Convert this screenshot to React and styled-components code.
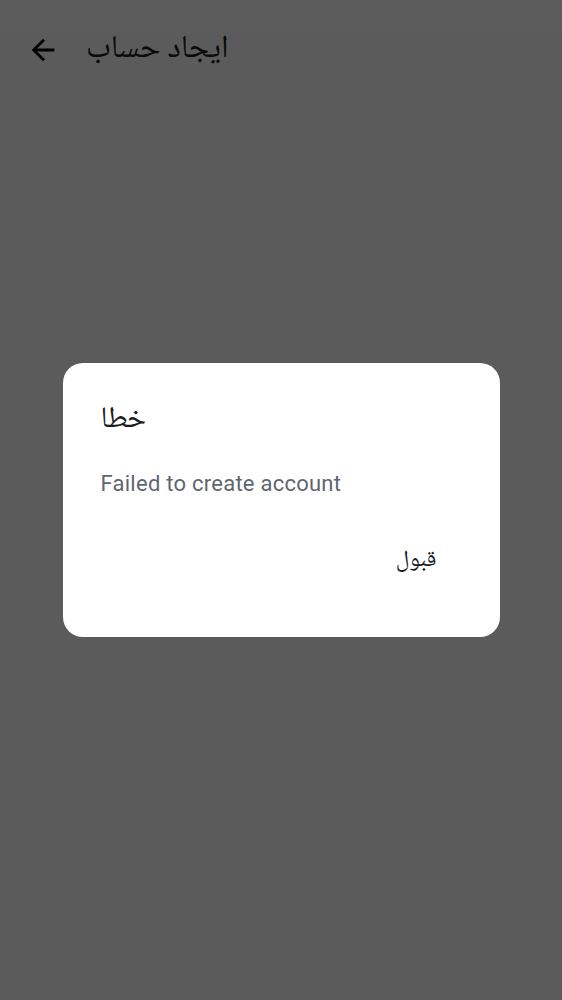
import React from 'react';
import styled, { createGlobalStyle } from 'styled-components';

const GlobalStyle = createGlobalStyle`
  html, body {
    margin: 0;
    padding: 0;
    height: 100%;
    background: #ffffff;
    font-family: Roboto, "Noto Naskh Arabic", sans-serif;
  }
  #root {
    min-height: 100%;
  }
`;

const Screen = styled.div`
  width: 562px;
  height: 1000px;
  background: #fbfbfb;
  display: flex;
  flex-direction: column;
`;

const StatusBar = styled.div`
  height: 34px;
  background: #ffffff;
`;

const AppBar = styled.div`
  height: 32px;
  display: flex;
  align-items: center;
  gap: 26px;
  padding: 0 26px;
`;

const BackButton = styled.button`
  border: 0;
  background: none;
  padding: 0;
  width: 34px;
  height: 34px;
  display: flex;
  align-items: center;
  justify-content: center;
  color: #000;
  cursor: pointer;
`;

const Title = styled.h1`
  margin: 0;
  font-family: "Noto Naskh Arabic", serif;
  font-size: 32px;
  line-height: 32px;
  font-weight: 400;
  color: #1c1c1c;
`;

const Scrim = styled.div`
  position: fixed;
  inset: 0;
  background: rgba(0, 0, 0, 0.64);
  display: flex;
  align-items: center;
  justify-content: center;
`;

const Dialog = styled.div`
  width: 437px;
  height: 274px;
  box-sizing: border-box;
  background: #ffffff;
  border-radius: 20px;
  padding: 38px 38px 0 38px;
  display: flex;
  flex-direction: column;
`;

const DialogTitle = styled.div`
  font-family: "Noto Naskh Arabic", serif;
  font-size: 30px;
  color: #1a1c1e;
  line-height: 40px;
`;

const DialogBody = styled.div`
  margin-top: 28px;
  font-size: 22px;
  line-height: 30px;
  letter-spacing: 0.25px;
  color: #5f6670;
`;

const Actions = styled.div`
  margin-top: 42px;
  display: flex;
  justify-content: flex-end;
`;

const TextButton = styled.button`
  border: 0;
  background: none;
  padding: 0 25px;
  height: 40px;
  font-family: "Noto Naskh Arabic", serif;
  font-size: 23px;
  color: #1a1c1e;
  cursor: pointer;
`;

function ArrowBack() {
  return (
    <svg width="34" height="34" viewBox="0 0 24 24" fill="currentColor">
      <path d="M20 11H7.83l5.59-5.59L12 4l-8 8 8 8 1.41-1.41L7.83 13H20v-2z" />
    </svg>
  );
}

export default function App() {
  return (
    <>
      <GlobalStyle />
      <Screen>
        <StatusBar />
        <AppBar>
          <BackButton aria-label="back">
            <ArrowBack />
          </BackButton>
          <Title>ایجاد حساب</Title>
        </AppBar>
      </Screen>
      <Scrim>
        <Dialog>
          <DialogTitle>خطا</DialogTitle>
          <DialogBody>Failed to create account</DialogBody>
          <Actions>
            <TextButton>قبول</TextButton>
          </Actions>
        </Dialog>
      </Scrim>
    </>
  );
}
